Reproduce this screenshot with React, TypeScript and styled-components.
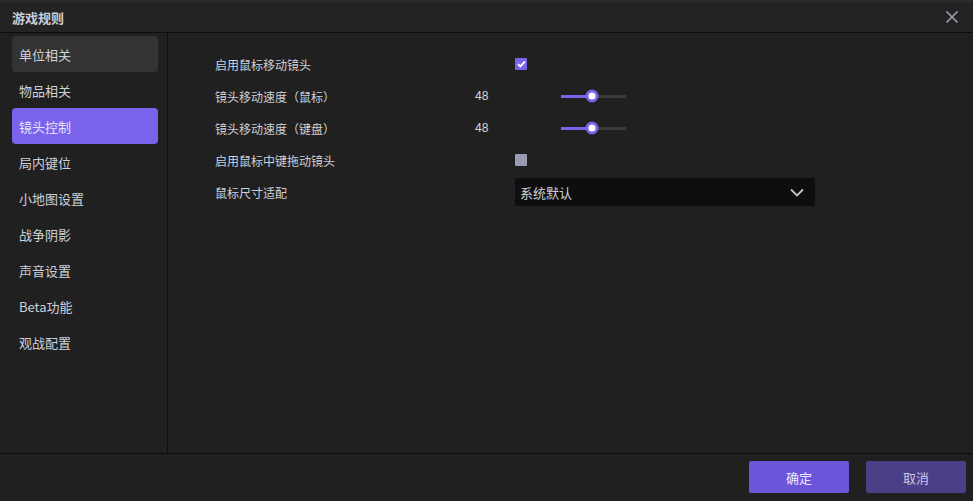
import { useState } from "react";
import styled, { createGlobalStyle } from "styled-components";

const GlobalStyle = createGlobalStyle`
  html, body {
    margin: 0;
    padding: 0;
    background: #1a1a1a;
  }
  body {
    font-family: "Noto Sans CJK SC", "Noto Sans", sans-serif;
    color: #cdd1da;
  }
`;

const Window = styled.div`
  width: 973px;
  height: 501px;
  display: flex;
  flex-direction: column;
  background: #202020;
  border-top: 2px solid #2b2b2b;
  box-sizing: border-box;
`;

const TitleBar = styled.div`
  height: 30px;
  flex-shrink: 0;
  display: flex;
  align-items: center;
  justify-content: space-between;
  padding: 0 14px 0 12px;
  background: #232323;
  border-bottom: 1px solid #0d0d0d;
`;

const Title = styled.div`
  font-size: 13px;
  font-weight: 700;
  color: #c9ced8;
`;

const CloseButton = styled.div`
  width: 14px;
  height: 14px;
  display: flex;
  cursor: pointer;
`;

const Body = styled.div`
  flex: 1;
  display: flex;
  min-height: 0;
`;

const Sidebar = styled.div`
  width: 168px;
  flex-shrink: 0;
  border-right: 1px solid #0d0d0d;
  padding: 3px 9px 0 12px;
  box-sizing: border-box;
  display: flex;
  flex-direction: column;
`;

const NavItem = styled.div<{ $active?: boolean; $hover?: boolean }>`
  height: 36px;
  display: flex;
  align-items: center;
  padding-left: 7px;
  border-radius: 4px;
  font-size: 13px;
  color: ${(p) => (p.$active ? "#e4e2f8" : "#cdd1da")};
  background: ${(p) => (p.$active ? "#7b62ea" : p.$hover ? "#333333" : "transparent")};
`;

const Content = styled.div`
  flex: 1;
  padding: 15px 0 0 47px;
`;

const Row = styled.div`
  height: 32px;
  display: grid;
  grid-template-columns: 260px 40px 1fr;
  align-items: center;
  font-size: 12px;
`;

const Label = styled.div`
  color: #cdd1da;
`;

const Value = styled.div`
  color: #d4d6dc;
  font-family: "Liberation Sans", "Noto Sans", sans-serif;
  font-size: 12px;
`;

const Checkbox = styled.div<{ $checked?: boolean }>`
  width: 12px;
  height: 12px;
  border-radius: 1px;
  background: ${(p) => (p.$checked ? "#7b62ea" : "#9a9cb2")};
  display: flex;
  align-items: center;
  justify-content: center;
`;

const SliderTrack = styled.div`
  margin-left: 46px;
  width: 65px;
  height: 3px;
  background: #3a3a3a;
  position: relative;
`;

const SliderFill = styled.div`
  position: absolute;
  left: 0;
  top: 0;
  height: 3px;
  background: #7b62ea;
`;

const SliderThumb = styled.div`
  position: absolute;
  top: 50%;
  width: 7px;
  height: 7px;
  border-radius: 50%;
  background: #ffffff;
  border: 3px solid #7b62ea;
  transform: translate(-50%, -50%);
`;

const Select = styled.div`
  width: 300px;
  height: 28px;
  box-sizing: border-box;
  background: #0e0e0e;
  border-radius: 2px;
  display: flex;
  align-items: center;
  justify-content: space-between;
  padding: 0 11px 0 5px;
  font-size: 13px;
  color: #cdd1da;
`;

const Footer = styled.div`
  height: 48px;
  flex-shrink: 0;
  border-top: 1px solid #0d0d0d;
  display: flex;
  justify-content: flex-end;
  align-items: flex-start;
  gap: 17px;
  padding: 7px 7px 0 0;
  box-sizing: border-box;
`;

const Button = styled.button<{ $primary?: boolean }>`
  width: 100px;
  height: 32px;
  border: none;
  border-radius: 2px;
  font-family: inherit;
  font-size: 13px;
  color: ${(p) => (p.$primary ? "#eeeaff" : "#c9c6e4")};
  background: ${(p) => (p.$primary ? "#6d55d9" : "#4b3f88")};
  cursor: pointer;
`;

const navItems = [
  "单位相关",
  "物品相关",
  "镜头控制",
  "局内键位",
  "小地图设置",
  "战争阴影",
  "声音设置",
  "Beta功能",
  "观战配置",
];

const Slider = ({ value, max }: { value: number; max: number }) => {
  const pct = (value / max) * 100;
  return (
    <SliderTrack>
      <SliderFill style={{ width: `${pct}%` }} />
      <SliderThumb style={{ left: `${pct}%` }} />
    </SliderTrack>
  );
};

const App = () => {
  const [active, setActive] = useState(2);
  const [edgePan, setEdgePan] = useState(true);
  const [middleDrag, setMiddleDrag] = useState(false);

  return (
    <>
      <GlobalStyle />
      <Window>
        <TitleBar>
          <Title>游戏规则</Title>
          <CloseButton>
            <svg width="14" height="14" viewBox="0 0 14 14">
              <path d="M1.5 1.5 L12.5 12.5 M12.5 1.5 L1.5 12.5" stroke="#9ea3b3" strokeWidth="1.6" />
            </svg>
          </CloseButton>
        </TitleBar>
        <Body>
          <Sidebar>
            {navItems.map((item, i) => (
              <NavItem
                key={item}
                $active={i === active}
                $hover={i === 0}
                onClick={() => setActive(i)}
              >
                {item}
              </NavItem>
            ))}
          </Sidebar>
          <Content>
            <Row>
              <Label>启用鼠标移动镜头</Label>
              <div />
              <Checkbox $checked={edgePan} onClick={() => setEdgePan(!edgePan)}>
                {edgePan && (
                  <svg width="9" height="8" viewBox="0 0 9 8">
                    <path d="M1 4.2 L3.4 6.4 L8 1.4" stroke="#fff" strokeWidth="1.8" fill="none" />
                  </svg>
                )}
              </Checkbox>
            </Row>
            <Row>
              <Label>镜头移动速度（鼠标）</Label>
              <Value>48</Value>
              <Slider value={48} max={100} />
            </Row>
            <Row>
              <Label>镜头移动速度（键盘）</Label>
              <Value>48</Value>
              <Slider value={48} max={100} />
            </Row>
            <Row>
              <Label>启用鼠标中键拖动镜头</Label>
              <div />
              <Checkbox $checked={middleDrag} onClick={() => setMiddleDrag(!middleDrag)} />
            </Row>
            <Row>
              <Label>鼠标尺寸适配</Label>
              <div />
              <Select>
                <span>系统默认</span>
                <svg width="14" height="9" viewBox="0 0 14 9">
                  <path d="M1 1.5 L7 7.5 L13 1.5" stroke="#c4c6cc" strokeWidth="1.8" fill="none" />
                </svg>
              </Select>
            </Row>
          </Content>
        </Body>
        <Footer>
          <Button $primary>确定</Button>
          <Button>取消</Button>
        </Footer>
      </Window>
    </>
  );
};

export default App;
